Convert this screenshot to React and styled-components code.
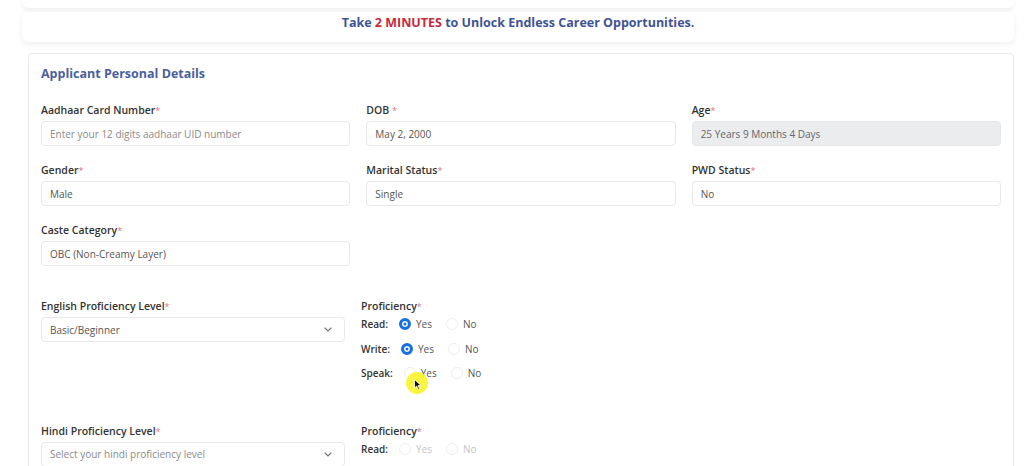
import React from "react";
import styled, { createGlobalStyle, css } from "styled-components";

const GlobalStyle = createGlobalStyle`
  * { box-sizing: border-box; }
  html, body { margin: 0; padding: 0; background: #ffffff; }
  body {
    font-family: "Open Sans", "Noto Sans", sans-serif;
    color: #333;
    overflow: hidden;
  }
`;

const App = () => {
  return (
    <Page>
      <GlobalStyle />
      <TopStub />
      <Banner>
        Take <Accent>2 MINUTES</Accent> to Unlock Endless Career Opportunities.
      </Banner>
      <Card>
        <Title>Applicant Personal Details</Title>
        <FieldGrid>
          <Field>
            <Label>
              Aadhaar Card Number<Req>*</Req>
            </Label>
            <Input placeholder>Enter your 12 digits aadhaar UID number</Input>
          </Field>
          <Field>
            <Label>
              DOB <Req>*</Req>
            </Label>
            <Input>May 2, 2000</Input>
          </Field>
          <Field>
            <Label>
              Age<Req>*</Req>
            </Label>
            <Input disabled>25 Years 9 Months 4 Days</Input>
          </Field>
          <Field>
            <Label>
              Gender<Req>*</Req>
            </Label>
            <Input>Male</Input>
          </Field>
          <Field>
            <Label>
              Marital Status<Req>*</Req>
            </Label>
            <Input>Single</Input>
          </Field>
          <Field>
            <Label>
              PWD Status<Req>*</Req>
            </Label>
            <Input>No</Input>
          </Field>
          <Field>
            <Label>
              Caste Category<Req>*</Req>
            </Label>
            <Input>OBC (Non-Creamy Layer)</Input>
          </Field>
        </FieldGrid>

        <LangBlock>
          <Field>
            <Label>
              English Proficiency Level<Req>*</Req>
            </Label>
            <Select>
              Basic/Beginner
              <Chevron />
            </Select>
          </Field>
          <Proficiency
            rows={[
              ["Read:", "yes"],
              ["Write:", "yes"],
              ["Speak:", null],
            ]}
          />
        </LangBlock>

        <LangBlock>
          <Field>
            <Label>
              Hindi Proficiency Level<Req>*</Req>
            </Label>
            <Select placeholder>
              Select your hindi proficiency level
              <Chevron />
            </Select>
          </Field>
          <Proficiency faded rows={[["Read:", null]]} />
        </LangBlock>
      </Card>
      <CursorHalo>
        <svg width="8" height="11" viewBox="0 0 8 11">
          <path d="M0.5 0.5 L0.5 9 L2.6 7 L4.2 10.4 L5.5 9.8 L4 6.6 L7 6.6 Z" fill="#111" stroke="#fff" strokeWidth="0.8" />
        </svg>
      </CursorHalo>
    </Page>
  );
};

const Proficiency = ({ rows, faded }) => (
  <ProfWrap>
    <Label>
      Proficiency<Req>*</Req>
    </Label>
    {rows.map(([name, value]) => (
      <RadioRow key={name}>
        <RowName>{name}</RowName>
        <Option faded={faded}>
          <Radio checked={value === "yes"} />
          Yes
        </Option>
        <Option faded={faded}>
          <Radio checked={value === "no"} />
          No
        </Option>
      </RadioRow>
    ))}
  </ProfWrap>
);

const Chevron = () => (
  <ChevronIcon width="8" height="5" viewBox="0 0 8 5">
    <path d="M1 1 L4 4 L7 1" fill="none" stroke="#777" strokeWidth="1.1" strokeLinecap="round" />
  </ChevronIcon>
);

const Page = styled.div`
  position: relative;
  height: 466px;
  padding: 0 10px 0 24px;
`;

const TopStub = styled.div`
  height: 8px;
  background: #fff;
  border-radius: 0 0 6px 6px;
  box-shadow: 0 2px 5px rgba(0, 0, 0, 0.07);
  margin: 0 0 0 -2px;
`;

const Banner = styled.div`
  margin: 4px 0 0 -2px;
  height: 30px;
  padding-top: 2px;
  text-align: center;
  background: #fff;
  border-radius: 6px;
  box-shadow: 0 2px 6px rgba(0, 0, 0, 0.07);
  font-size: 12.5px;
  font-weight: 700;
  color: #3f5496;
`;

const Accent = styled.span`
  color: #c9283d;
`;

const Card = styled.div`
  margin: 11px 0 0 4px;
  border: 1px solid #e8e8e8;
  border-radius: 4px;
  padding: 12px 12px 0 12px;
  background: #fff;
`;

const Title = styled.div`
  font-size: 12.5px;
  font-weight: 700;
  color: #4a5f9e;
  line-height: 16px;
  margin-bottom: 21px;
`;

const FieldGrid = styled.div`
  display: grid;
  grid-template-columns: repeat(3, 1fr);
  column-gap: 16px;
  row-gap: 17px;
`;

const Field = styled.div`
  display: flex;
  flex-direction: column;
`;

const Label = styled.div`
  height: 14px;
  font-size: 10.5px;
  font-weight: 600;
  color: #333;
  line-height: 14px;
  margin-bottom: 4px;
`;

const Req = styled.span`
  color: #e0707e;
  font-weight: 400;
  font-size: 9px;
  line-height: 0;
`;

const Input = styled.div`
  height: 25px;
  border: 1px solid #e8e8e8;
  border-radius: 4px;
  padding: 0 8px;
  display: flex;
  align-items: center;
  font-size: 10px;
  color: #555;
  background: #fff;
  ${({ placeholder }) =>
    placeholder &&
    css`
      color: #8a8a8a;
    `}
  ${({ disabled }) =>
    disabled &&
    css`
      background: #ebecee;
      border-color: #e6e7e9;
      color: #666;
    `}
`;

const Select = styled(Input)`
  justify-content: space-between;
  padding-right: 12px;
`;

const ChevronIcon = styled.svg`
  flex: none;
`;

const LangBlock = styled.div`
  display: grid;
  grid-template-columns: 304px 1fr;
  column-gap: 16px;
  margin-top: 33px;
  min-height: 91px;
  align-items: start;
`;

const ProfWrap = styled.div`
  display: flex;
  flex-direction: column;
`;

const RadioRow = styled.div`
  display: flex;
  align-items: center;
  height: 14px;
  margin-bottom: 10.5px;
  font-size: 10px;
`;

const RowName = styled.span`
  font-weight: 600;
  color: #333;
  margin-right: 11px;
`;

const Option = styled.span`
  display: inline-flex;
  align-items: center;
  gap: 5px;
  margin-right: 14px;
  color: #555;
  ${({ faded }) =>
    faded &&
    css`
      color: #c4c4c4;
    `}
`;

const Radio = styled.span`
  width: 12px;
  height: 12px;
  border-radius: 50%;
  border: 1px solid #eeeeee;
  background: #fff;
  ${({ checked }) =>
    checked &&
    css`
      border: 3px solid #1a6fe0;
      box-shadow: inset 0 0 0 1.5px #fff, inset 0 0 0 6px #1a6fe0;
    `}
`;

const CursorHalo = styled.div`
  position: absolute;
  left: 406px;
  top: 372px;
  width: 22px;
  height: 22px;
  border-radius: 50%;
  background: rgba(250, 245, 40, 0.9);
  display: flex;
  align-items: center;
  justify-content: center;
  padding: 3px 0 0 2px;
`;

export default App;
